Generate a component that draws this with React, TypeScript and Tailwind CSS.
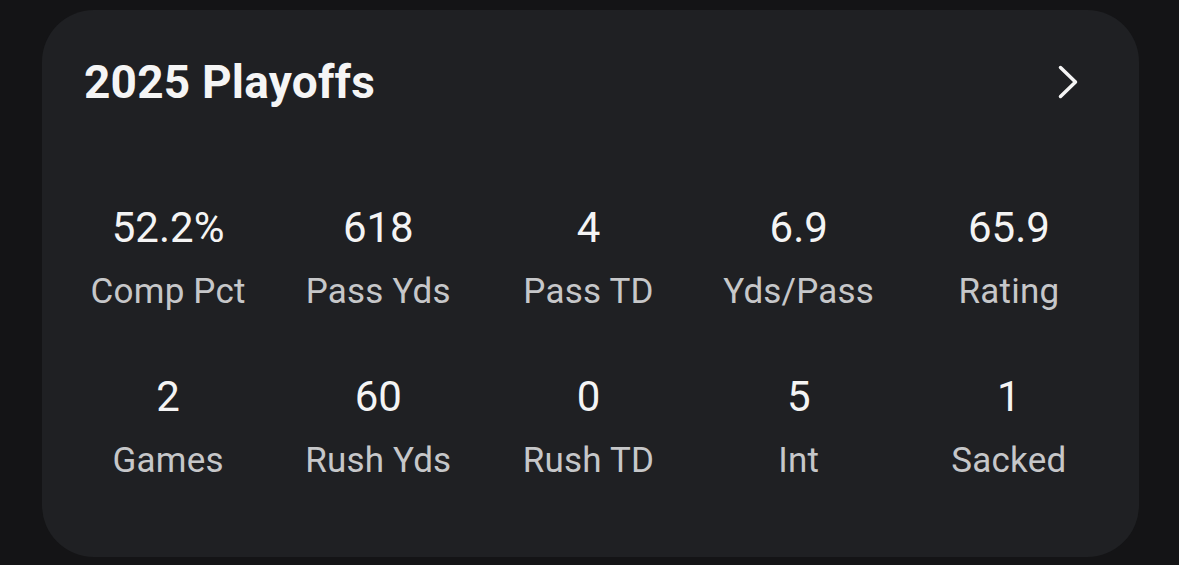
import React from "react";

const stats = [
  { v: "52.2%", l: "Comp Pct" },
  { v: "618", l: "Pass Yds" },
  { v: "4", l: "Pass TD" },
  { v: "6.9", l: "Yds/Pass" },
  { v: "65.9", l: "Rating" },
  { v: "2", l: "Games" },
  { v: "60", l: "Rush Yds" },
  { v: "0", l: "Rush TD" },
  { v: "5", l: "Int" },
  { v: "1", l: "Sacked" },
];

export default function App() {
  return (
    <div
      className="w-[1179px] h-[565px] bg-[#141416] pt-[10px] pl-[42px] overflow-hidden"
      style={{ fontFamily: "Roboto, 'Noto Sans', sans-serif" }}
    >
      <div className="w-[1097px] h-[547px] rounded-[52px] bg-[#1f2023] pt-[45px]">
        <div className="flex items-center justify-between pl-[42px] pr-[61px]">
          <h1 className="text-[46px] leading-[54px] font-bold text-[#f5f5f5] tracking-[0.2px]">
            2025 Playoffs
          </h1>
          <svg width="20" height="34" viewBox="0 0 20 34" fill="none">
            <path
              d="M2.5 2.5 L17.5 17 L2.5 31.5"
              stroke="#f5f5f5"
              strokeWidth="3.5"
              strokeLinecap="round"
              strokeLinejoin="round"
            />
          </svg>
        </div>
        <div className="mt-[95px] pl-[21px] pr-[25px] grid grid-cols-5 gap-y-[60px]">
          {stats.map((s) => (
            <div key={s.l} className="flex flex-col items-center">
              <div className="text-[42px] leading-[48px] font-normal text-[#f4f4f4]">
                {s.v}
              </div>
              <div className="mt-[19px] text-[35px] leading-[42px] tracking-[0.2px] text-[#c6c7c9]">
                {s.l}
              </div>
            </div>
          ))}
        </div>
      </div>
    </div>
  );
}
